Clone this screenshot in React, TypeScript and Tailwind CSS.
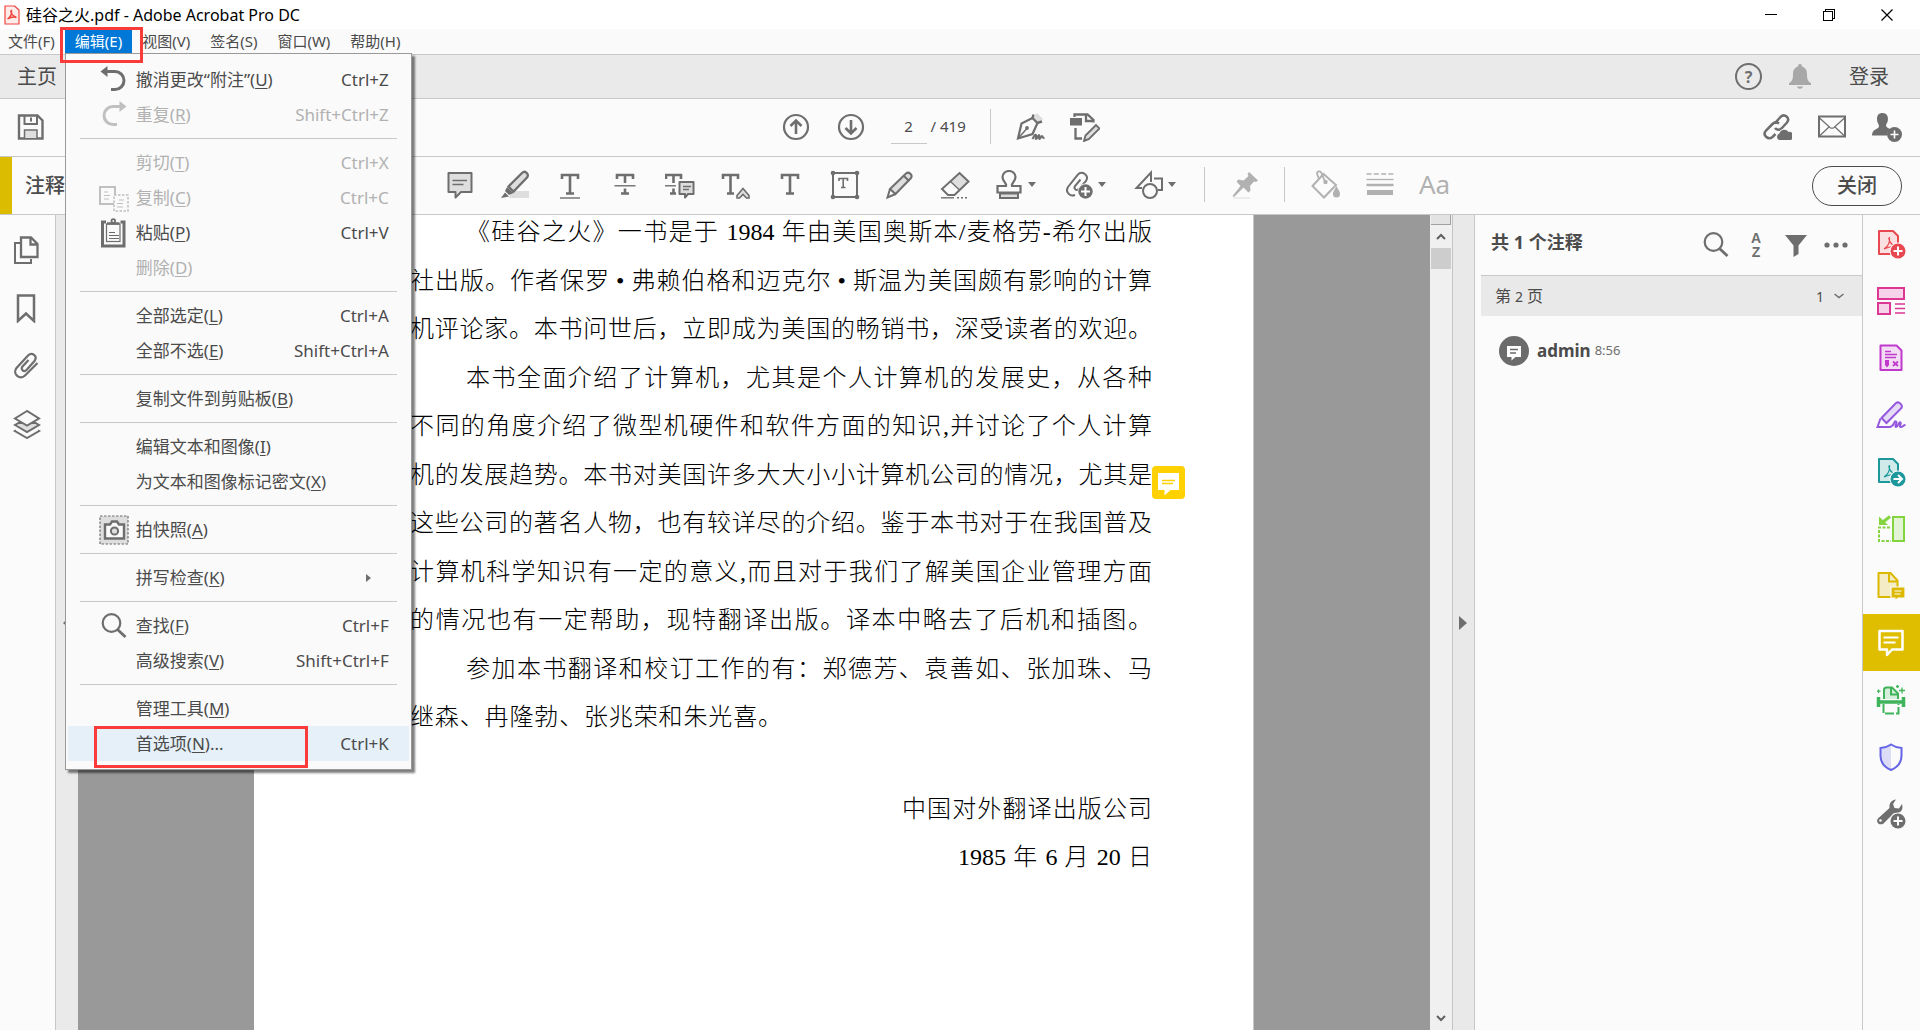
import { Fragment, type ReactNode } from "react";
import clsx from "clsx";

type IconProps = { children: ReactNode; className?: string };

/** Base of every toolbar drawing: a 30px box, 2px strokes in the current colour. */
function Icon({ children, className }: IconProps) {
    return (
        <svg
            viewBox="0 0 30 30"
            className={clsx("h-[30px] w-[30px] shrink-0", className)}
            fill="none"
            stroke="currentColor"
            strokeWidth="2"
            aria-hidden="true"
        >
            {children}
        </svg>
    );
}

const SHADE = "#dedede";

// ---------- Top toolbar ----------
const SaveIcon = () => (
    <Icon>
        <path d="M3 3.500h18.500l5 5V26.500H3z" strokeWidth="2.400" />
        <path d="M8.500 4v8h12.500V4M15 5.500v4" />
        <path d="M8.500 26v-8h12.500v8" fill={SHADE} strokeWidth="1.500" />
    </Icon>
);

const ArrowUpIcon = () => (
    <Icon>
        <circle cx="15" cy="15" r="12" strokeWidth="2.200" />
        <path d="M15 22V9M9.500 14l5.500-5.500 5.500 5.500" strokeWidth="2.600" />
    </Icon>
);

const ArrowDownIcon = () => (
    <Icon>
        <circle cx="15" cy="15" r="12" strokeWidth="2.200" />
        <path d="M15 8v13M9.500 16l5.500 5.500 5.500-5.500" strokeWidth="2.600" />
    </Icon>
);

const SignIcon = () => (
    <Icon>
        <path d="M18.500 5l3.500-4 6 6-4 4z" fill={SHADE} stroke="none" />
        <path d="M18.500 2.500L17.500 6l5 5 4.500-1.500" strokeWidth="2.400" />
        <path d="M17.500 6L6.500 11.500 3 26.500l14.500-4.500 5-11" strokeWidth="2.200" />
        <path d="M3 26.500l8.500-9.500" strokeWidth="1.500" />
        <circle cx="12" cy="16" r="1.900" fill="currentColor" stroke="none" />
        <path d="M17.500 27c2-4 3-5 3.500-4s-1 4 0 4 2-4 3-4-.500 4 .500 4 1.500-3 2.500-3 0 2.500 2.500 2" />
    </Icon>
);

const EditPdfIcon = () => (
    <Icon>
        <rect x="0" y="6" width="12" height="7.500" fill="currentColor" stroke="none" />
        <path d="M4.500 5V2.500h13l6 5.500v2.500M16 2.500V9h6.500" strokeWidth="2.300" />
        <path d="M5.500 16v10.500h6.500" strokeWidth="2.300" />
        <path d="M14 29l1.500-5.500L26 13l3.500 3.500L19 27z" fill={SHADE} strokeWidth="1.900" />
    </Icon>
);

const LinkCloudIcon = () => (
    <Icon>
        <path d="M12.500 11.500l6-6.500c4-4 10 1 6.500 5.500l-5.500 6c-2 2-5 1.500-6.500-.500" strokeWidth="2.500" />
        <path d="M17 11.500c-2-1.500-4.500-1.500-6.500.500L4 18.500c-4 4.500 2 10 6.500 6.500l3-3" strokeWidth="2.500" />
        <path
            d="M17 28a3.500 3.500 0 0 1 .500-6.500 5 5 0 0 1 9-1.500 4 4 0 0 1 2 8z"
            fill="currentColor"
            stroke="#fbfbfb"
            strokeWidth="1.500"
            paintOrder="stroke"
        />
    </Icon>
);

const MailIcon = () => (
    <Icon>
        <rect x="2" y="4.500" width="26" height="20" />
        <path d="M2.500 6L13 15.500q2 1.500 4 0L27.500 6M2.500 24l9.500-9M27.500 24L18 15" strokeWidth="1.200" />
    </Icon>
);

const AddUserIcon = () => (
    <Icon>
        <path
            d="M10.500 1c4 0 5.500 3 5.500 6 0 3.500-2 5-2 6.500 0 2 4 3 4 4-2 2-3 3-3 6H0c0-7 7-6 7-9.500 0-2-2-3-2-7s2-6 5.500-6z"
            fill="currentColor"
            stroke="none"
        />
        <circle cx="22.500" cy="22.500" r="7.500" fill="currentColor" stroke="none" />
        <path d="M22.500 18.500v8M18.500 22.500h8" stroke="#fff" strokeWidth="1.600" />
    </Icon>
);

const BellIcon = () => (
    <Icon>
        <path
            d="M15 2c1.500 0 2 1 2 2.500 4 1.500 5 4 5 8 0 5 1 7 4 8.500v2H4v-2c3-1.500 4-3.500 4-8.500 0-4 1-6.500 5-8C13 3 13.500 2 15 2zM12 24.500h6c-1 3-5 3-6 0z"
            fill="currentColor"
            stroke="none"
        />
    </Icon>
);

// ---------- Comment toolbar ----------
const NoteIcon = () => (
    <Icon>
        <path d="M3.500 3h23v19H16l-5.500 5.500V22h-7z" fill={SHADE} strokeLinejoin="round" />
        <path d="M7.500 10.500h14.500M7.500 14.500h11" strokeWidth="1.400" />
    </Icon>
);

const HighlightIcon = () => (
    <Icon>
        <path d="M12 21h17v7H9z" fill={SHADE} stroke="none" />
        <path d="M8.500 16.500L22 3c3-3 7.500 1 5 4.500L13.500 21.500z" fill={SHADE} strokeWidth="2.300" />
        <path d="M7 17l6.500 6-4.500 2-4-4zM1 28l4-5.500 4 4z" fill="currentColor" stroke="none" />
    </Icon>
);

const UnderlineIcon = () => (
    <Icon>
        <path d="M7 9V5h16v4M15 5v18.500M11 23.500h8" strokeWidth="2.600" />
        <path d="M5 28h20" strokeWidth="1.400" />
    </Icon>
);

const StrikeIcon = () => (
    <Icon>
        <path d="M7 9V5h16v4M15 5v8M15 18.500v5M11 23.500h8" strokeWidth="2.600" />
        <path d="M4.500 15.800h21" strokeWidth="1.400" />
    </Icon>
);

const ReplaceIcon = () => (
    <Icon>
        <path d="M1 9V5h15v4M8.500 5v8M8.500 18.500v5M5 23.500h6" strokeWidth="2.600" />
        <path d="M0 15.800h11" strokeWidth="1.400" />
        <path d="M14.500 12h14v12H23l-3 3.500V24h-5.500z" fill={SHADE} strokeLinejoin="round" />
        <path d="M18 16.500h8M18 19.500h6" strokeWidth="1.400" />
    </Icon>
);

const InsertIcon = () => (
    <Icon>
        <path d="M3 9V5h15v4M10.500 5v18.500M7 23.500h7" strokeWidth="2.600" />
        <path d="M17 25.500l6-7 6 7V28h-2.500L23 24.500 19.500 28H17z" fill={SHADE} strokeWidth="1.600" />
    </Icon>
);

const AddTextIcon = () => (
    <Icon>
        <path d="M7 9V5h16v4M15 5v18.500M11 23.500h8" strokeWidth="2.600" />
    </Icon>
);

const TextBoxIcon = () => (
    <Icon>
        <rect x="3" y="3" width="24" height="24" />
        <path d="M9 11V8.500h8.500V11M13.200 8.500v9M11 17.500h4.500" strokeWidth="1.600" />
        <g fill="currentColor" stroke="none">
            <circle cx="3" cy="3" r="2.300" />
            <circle cx="27" cy="3" r="2.300" />
            <circle cx="3" cy="27" r="2.300" />
            <circle cx="27" cy="27" r="2.300" />
        </g>
    </Icon>
);

const PencilIcon = () => (
    <Icon>
        <path d="M5 19L21 3.500c3-2.500 7 1.500 5 4.500L10.500 24z" fill={SHADE} />
        <path d="M5 19l-2.500 8.500L10.500 24M18.500 5.500l5.500 5.500" />
    </Icon>
);

const EraserIcon = () => (
    <Icon>
        <path d="M10.500 11l9.500-8 8.500 8-8.500 9z" fill={SHADE} stroke="none" />
        <path d="M19.500 3l9 8.500L14.500 25H8l-6-6z" />
        <path d="M10.500 11.500l9 8.500" strokeWidth="1.400" />
        <path d="M1 27.800h13" strokeWidth="1.400" />
        <path d="M17 27.800h11" strokeWidth="1.400" strokeDasharray="2 2" />
    </Icon>
);

const StampIcon = () => (
    <Icon>
        <path d="M12 16c1-3-3.500-4.500-3.500-9a6.500 6 0 0 1 13 0c0 4.500-4.500 6-3.500 9h8.500v6.500h-23V16z" strokeWidth="2.200" />
        <path d="M6 23.500h18V28H6z" fill={SHADE} />
    </Icon>
);

const AttachIcon = () => (
    <Icon>
        <path d="M11 25c-5 2-10-3-7-8L14 4.500c4-4.500 11.500 1 8 6.500l-7 8c-3 2.500-5.500-.500-4-3l5.500-6.500" />
        <circle cx="21.500" cy="21.500" r="8" fill="#fafafa" stroke="none" />
        <circle cx="21.500" cy="21.500" r="7.200" fill="currentColor" stroke="none" />
        <path d="M21.500 17v9M17 21.500h9" stroke="#fff" />
    </Icon>
);

const ShapesIcon = () => (
    <Icon>
        <path d="M17 12V2.500L2.500 18H8M20 8.500h8V20h-4" />
        <circle cx="16" cy="21" r="7" />
    </Icon>
);

const PinIcon = () => (
    <Icon>
        <path
            d="M19 2l9 8.500-2 1.500-2-.500-4 4.500.500 4.500-2 2-5-5L4 27l-1.500-1L10.500 16 6.500 11.500l2-2 5 1 5-4.500L17.500 4z"
            fill="currentColor"
            stroke="none"
        />
        <path d="M3 28h17" stroke="#ececec" />
    </Icon>
);

const BucketIcon = () => (
    <Icon>
        <path d="M13.500 4L2.500 16 14 27.500 26 15z" />
        <path d="M15.500 13L11.500 3C9.500-.500 6 2 7.500 5l1.500 4" strokeWidth="1.800" />
        <circle cx="15.500" cy="12" r="2.200" fill="currentColor" stroke="none" />
        <path d="M26.500 16c2 4 3.500 5.500 3.500 8a3.500 3.500 0 0 1-7 0c0-2.500 1.500-4 3.500-8z" fill="currentColor" stroke="none" />
    </Icon>
);

const LineWeightIcon = () => (
    <Icon>
        <path d="M1.500 4h27" strokeWidth="1.300" strokeDasharray="5 2.300" />
        <path d="M1.500 9.500h27" strokeWidth="1.300" />
        <path d="M1.500 15h27" strokeWidth="2.500" />
        <path d="M2 22.500h26" strokeWidth="5" />
    </Icon>
);

// ---------- Left rail ----------
const PagesIcon = () => (
    <Icon>
        <path d="M9 2.500h10l6.500 6.500v13H9zM18.500 3v6.500h6.500" strokeWidth="2.300" />
        <path d="M8 8H3v20h16v-4" />
    </Icon>
);

const BookmarkIcon = () => (
    <Icon>
        <path d="M6 2.500h16V28l-8-7.500L6 28z" strokeWidth="2.500" />
    </Icon>
);

const ClipIcon = () => (
    <Icon>
        <path
            d="M16.500 9l-6 6.500c-2.500 3 1.500 6 4 3.500l8-9C26 5 20 .500 16 4.500L4.500 17c-4.500 6 3.500 12.500 8.500 7.500L25.500 12"
            strokeWidth="2.200"
        />
    </Icon>
);

const LayersIcon = () => (
    <Icon>
        <path d="M4 21.500l-1 .500 12 7 12-7-1-.500" />
        <path d="M3 16l12 7 12-7-3.500-2H6.500z" fill={SHADE} />
        <path d="M15 2L3 9.500l12 7 12-7z" fill="#fafafa" />
    </Icon>
);

// ---------- Edit menu ----------
const UndoIcon = () => (
    <Icon>
        <path d="M8 6.500h8a8.800 8.800 0 0 1 0 18h-4" strokeWidth="3" />
        <path d="M1.500 6.500l7-5.500v11z" fill="currentColor" stroke="none" />
    </Icon>
);

const RedoIcon = () => (
    <Icon>
        <path d="M21 6.500h-7a8.800 8.800 0 0 0 0 18h4" strokeWidth="3" />
        <path d="M27.500 6.500L20.500 1v11z" fill="currentColor" stroke="none" />
    </Icon>
);

const CopyIcon = () => (
    <Icon>
        <rect x="1" y="4" width="15" height="17" />
        <path d="M5 9h4M5 12.500h6M5 16h5" strokeWidth="1.200" />
        <rect x="15" y="12" width="14" height="16" fill="#fafafa" strokeDasharray="2.500 1.500" strokeWidth="1.500" />
        <path d="M20 17h5M18 20.500h6M18 24h6" strokeWidth="1.200" />
    </Icon>
);

const PasteIcon = () => (
    <Icon>
        <path d="M7 4H3.500v24H25V4H21.500" strokeWidth="3" />
        <rect x="7.500" y="6" width="13.500" height="17.500" fill="#fafafa" strokeWidth="1.200" />
        <path d="M8 5.500h12.500" strokeWidth="2.500" />
        <circle cx="14.300" cy="3" r="1.800" strokeWidth="1.800" />
        <path d="M10 14.500h6M10 17.500h10M10 20.500h10" strokeWidth="1.200" />
    </Icon>
);

const CameraIcon = () => (
    <Icon>
        <rect x="1" y="1" width="28" height="28" fill={SHADE} strokeDasharray="2.500 1.500" strokeWidth="1.200" />
        <path d="M6 9.500h5l2-3h5l2 3h5v14H6z" fill="#fafafa" strokeWidth="2.400" />
        <circle cx="15.500" cy="16" r="3.600" fill={SHADE} />
    </Icon>
);

const SearchIcon = () => (
    <Icon>
        <circle cx="12.500" cy="12" r="8.800" strokeWidth="2.200" />
        <path d="M18.500 18.500l8 7.500" strokeWidth="2.800" />
    </Icon>
);

// ---------- Comments panel ----------
const FilterIcon = () => (
    <Icon>
        <path d="M4 5h22l-8.500 10.500V24l-5 3V15.500z" fill="currentColor" stroke="none" />
    </Icon>
);

const MoreIcon = () => (
    <Icon>
        <g fill="currentColor" stroke="none">
            <circle cx="6" cy="15" r="2.600" />
            <circle cx="15" cy="15" r="2.600" />
            <circle cx="24" cy="15" r="2.600" />
        </g>
    </Icon>
);

// ---------- Right rail ----------
const SQUIGGLE = "M8 20c4-2.500 6-7 5.500-11.500-1.500 0-.500 6.500 7 9.500-3.500-1-7.500-.500-12.500 2z";

const CreatePdfIcon = () => (
    <Icon className="text-[#e8484f]">
        <path d="M3 2h14l5 5v18H3z" fill="#fae0e1" strokeLinejoin="round" />
        <path d={SQUIGGLE} strokeWidth="1.200" />
        <circle cx="22" cy="22" r="8.500" fill="#fafafa" stroke="none" />
        <circle cx="22" cy="22" r="7.500" fill="currentColor" stroke="none" />
        <path d="M22 17.500v9M17.500 22h9" stroke="#fff" />
    </Icon>
);

const OrganizeIcon = () => (
    <Icon className="text-[#dc3792]">
        <rect x="2" y="2" width="26" height="11" fill="#f6d3e8" />
        <rect x="2" y="17" width="12" height="11" fill="#f6d3e8" />
        <path d="M19 18h10M19 22.500h10M19 27h10" strokeWidth="1.400" />
    </Icon>
);

const FormIcon = () => (
    <Icon className="text-[#c038cc]">
        <path d="M4.500 2.500h16l5 5v19.500h-21z" fill="#f3ddf5" strokeLinejoin="round" />
        <path d="M9 8.500h6M9 11.500h12M9 14.500h11" strokeWidth="1.300" />
        <path d="M9 17h4v5l-2 2.500L9 22z" fill="currentColor" stroke="none" />
        <path d="M17 18.500l5 4.500M22 18.500L17 23" strokeWidth="1.800" />
    </Icon>
);

const FillSignIcon = () => (
    <Icon className="text-[#9458dd]">
        <path d="M5.500 18L20 3c3-2 7 2 5.500 5L10.500 23z" fill="#e6dbf6" />
        <path d="M4.500 18.500L1.500 27H14c5-1 4-7 6-5.500s-2 5 0 5.500 3-6 4.500-4.500-2 4 0 4.500 2.500-2 5-2" />
    </Icon>
);

const ExportPdfIcon = () => (
    <Icon className="text-[#1c979c]">
        <path d="M3 2h14l5 5v18H3z" fill="#d0eaea" strokeLinejoin="round" />
        <path d={SQUIGGLE} strokeWidth="1.200" />
        <circle cx="22" cy="22" r="8.500" fill="#fafafa" stroke="none" />
        <circle cx="22" cy="22" r="7.500" fill="currentColor" stroke="none" />
        <path d="M17.500 22h7M22 18l4 4-4 4" stroke="#fff" />
    </Icon>
);

const CombineIcon = () => (
    <Icon className="text-[#83d43f]">
        <rect x="17" y="3" width="11" height="24" fill="#e2f4d5" />
        <path d="M14 13.500H3V27h12" strokeDasharray="3 1.500" strokeWidth="2" />
        <path d="M14 2.500L7 8" strokeWidth="3" />
        <path d="M3 2.500v8.500h9z" fill="currentColor" stroke="none" />
    </Icon>
);

const FileCommentIcon = () => (
    <Icon className="text-[#dcb900]">
        <path d="M2.500 2h12l7 7.500V26h-19z" fill="#f4ecc4" strokeLinejoin="round" />
        <path d="M13 3v7.500h8" />
        <path d="M15 16h14v11h-7l-3 3v-3h-4z" fill="currentColor" stroke="#fafafa" strokeWidth="1.200" />
        <path d="M18.500 20h7M18.500 23h6" stroke="#fff" strokeWidth="1.200" />
    </Icon>
);

const CommentIcon = () => (
    <Icon className="text-white">
        <path d="M3.500 3h23v18.500H16L11 27v-5.500H3.500z" strokeWidth="2.500" strokeLinejoin="round" />
        <path d="M7.500 9.500h15M7.500 14.500h12" />
    </Icon>
);

const ScanIcon = () => (
    <Icon className="text-[#3fb45a]">
        <path d="M8 14V5c0-1.500 1-2.500 2.500-2.500H16l6 6V14" fill="#d6efdc" />
        <path d="M15 3v6.500h6.500" />
        <path d="M2.500 12v10M27.500 12v10M2 17h26" strokeWidth="3.500" />
        <path d="M7.500 19v9.500h15V19" strokeDasharray="9 2" />
        <path d="M26 2.500v6M23 5.500h6M21.500 0v3M20 1.500h3M2.500 4.500v3.500M1 6.200h3.500" strokeWidth="1.300" />
    </Icon>
);

const ShieldIcon = () => (
    <Icon className="text-[#6665e6]">
        <path d="M15 2.500v25.500C8 25 4.500 20 4.500 14V6C9 6 12 4.500 15 2.500z" fill="#dddcf6" stroke="none" />
        <path d="M15 2.500c3 2 6 3.500 10.500 3.500v8c0 6-3.500 11-10.500 14C8 25 4.500 20 4.500 14V6C9 6 12 4.500 15 2.500z" />
    </Icon>
);

const ToolsIcon = () => (
    <Icon className="text-[#6e6e6e]">
        <path
            d="M20 .500l-3 4.500 1.500 4 4.500.500 3-4.500c2 7-3 10-8 9L7.500 24.500C4 27-1 23.500 2 19.500L13.500 9c-.500-5 2-8 6.500-8.500z"
            fill="currentColor"
            stroke="none"
        />
        <circle cx="4.500" cy="21.500" r="1.300" fill="#fff" stroke="none" />
        <circle cx="22" cy="22" r="8.500" fill="#fafafa" stroke="none" />
        <circle cx="22" cy="22" r="7.500" fill="currentColor" stroke="none" />
        <path d="M22 17.500v9M17.500 22h9" stroke="#fff" />
    </Icon>
);

const AcrobatLogo = () => (
    <svg viewBox="0 0 16 20" className="h-5 w-4" fill="none" stroke="#f0443e" aria-hidden="true">
        <path d="M1 1h9.500L15 5v14H1z" fill="#fdecea" strokeWidth="1.200" strokeLinejoin="round" />
        <path d="M3.500 14c3-2 4.500-5 4-8.500-1.500 0-.500 5 5 7-2.500-1-5.500-.500-9 1.500z" strokeWidth="1.400" />
    </svg>
);

const Caret = () => (
    <svg viewBox="0 0 8 5" className="h-[5px] w-2" fill="currentColor" aria-hidden="true">
        <path d="M0 0h8L4 5z" />
    </svg>
);

// ---------- Data ----------
type MenuEntry = {
    label: string;
    accessKey: string;
    suffix?: string;
    shortcut?: string;
    icon?: ReactNode;
    disabled?: boolean;
    submenu?: boolean;
    active?: boolean;
};

const EDIT_MENU: MenuEntry[][] = [
    [
        { label: "撤消更改“附注”", accessKey: "U", shortcut: "Ctrl+Z", icon: <UndoIcon /> },
        { label: "重复", accessKey: "R", shortcut: "Shift+Ctrl+Z", icon: <RedoIcon />, disabled: true },
    ],
    [
        { label: "剪切", accessKey: "T", shortcut: "Ctrl+X", disabled: true },
        { label: "复制", accessKey: "C", shortcut: "Ctrl+C", icon: <CopyIcon />, disabled: true },
        { label: "粘贴", accessKey: "P", shortcut: "Ctrl+V", icon: <PasteIcon /> },
        { label: "删除", accessKey: "D", disabled: true },
    ],
    [
        { label: "全部选定", accessKey: "L", shortcut: "Ctrl+A" },
        { label: "全部不选", accessKey: "E", shortcut: "Shift+Ctrl+A" },
    ],
    [{ label: "复制文件到剪贴板", accessKey: "B" }],
    [
        { label: "编辑文本和图像", accessKey: "I" },
        { label: "为文本和图像标记密文", accessKey: "X" },
    ],
    [{ label: "拍快照", accessKey: "A", icon: <CameraIcon /> }],
    [{ label: "拼写检查", accessKey: "K", submenu: true }],
    [
        { label: "查找", accessKey: "F", shortcut: "Ctrl+F", icon: <SearchIcon /> },
        { label: "高级搜索", accessKey: "V", shortcut: "Shift+Ctrl+F" },
    ],
    [
        { label: "管理工具", accessKey: "M" },
        { label: "首选项", accessKey: "N", suffix: "...", shortcut: "Ctrl+K", active: true },
    ],
];

type Line = { text: string; indent?: boolean; last?: boolean };

const LINES: Line[] = [
    { text: "《硅谷之火》一书是于 1984 年由美国奥斯本/麦格劳-希尔出版", indent: true },
    { text: "社出版。作者保罗•弗赖伯格和迈克尔•斯温为美国颇有影响的计算" },
    { text: "机评论家。本书问世后，立即成为美国的畅销书，深受读者的欢迎。" },
    { text: "本书全面介绍了计算机，尤其是个人计算机的发展史，从各种", indent: true },
    { text: "不同的角度介绍了微型机硬件和软件方面的知识,并讨论了个人计算" },
    { text: "机的发展趋势。本书对美国许多大大小小计算机公司的情况，尤其是" },
    { text: "这些公司的著名人物，也有较详尽的介绍。鉴于本书对于在我国普及" },
    { text: "计算机科学知识有一定的意义,而且对于我们了解美国企业管理方面" },
    { text: "的情况也有一定帮助，现特翻译出版。译本中略去了后机和插图。" },
    { text: "参加本书翻译和校订工作的有：郑德芳、袁善如、张加珠、马", indent: true },
    { text: "继森、冉隆勃、张兆荣和朱光喜。", last: true },
];

const COMMENT_TOOLS = [
    { name: "添加附注", icon: <NoteIcon /> },
    { name: "高亮文本", icon: <HighlightIcon /> },
    { name: "下划线文本", icon: <UnderlineIcon /> },
    { name: "删划线文本", icon: <StrikeIcon /> },
    { name: "替换文本", icon: <ReplaceIcon /> },
    { name: "插入文本", icon: <InsertIcon /> },
    { name: "添加文本注释", icon: <AddTextIcon /> },
    { name: "添加文本框", icon: <TextBoxIcon /> },
    { name: "绘图工具", icon: <PencilIcon /> },
    { name: "擦除绘图", icon: <EraserIcon /> },
];

const DROPDOWN_TOOLS = [
    { name: "添加图章", icon: <StampIcon /> },
    { name: "附加文件", icon: <AttachIcon /> },
    { name: "绘图形状", icon: <ShapesIcon /> },
];

const LEFT_RAIL = [
    { name: "页面缩略图", icon: <PagesIcon /> },
    { name: "书签", icon: <BookmarkIcon /> },
    { name: "附件", icon: <ClipIcon /> },
    { name: "图层", icon: <LayersIcon /> },
];

const RIGHT_RAIL = [
    { name: "创建 PDF", icon: <CreatePdfIcon /> },
    { name: "组织页面", icon: <OrganizeIcon /> },
    { name: "准备表单", icon: <FormIcon /> },
    { name: "填写和签名", icon: <FillSignIcon /> },
    { name: "导出 PDF", icon: <ExportPdfIcon /> },
    { name: "合并文件", icon: <CombineIcon /> },
    { name: "发送以供注释", icon: <FileCommentIcon /> },
    { name: "注释", icon: <CommentIcon />, active: true },
    { name: "扫描和 OCR", icon: <ScanIcon /> },
    { name: "保护", icon: <ShieldIcon /> },
    { name: "更多工具", icon: <ToolsIcon /> },
];

// ---------- Sections ----------
function TitleBar() {
    return (
        <header className="flex h-[29px] shrink-0 items-center bg-white pl-1 text-black">
            <AcrobatLogo />
            <h1 className="ml-1.5 text-[16px]">硅谷之火.pdf - Adobe Acrobat Pro DC</h1>
            <div className="ml-auto flex h-full pr-1">
                <button aria-label="最小化" className="flex w-[58px] items-center justify-center">
                    <svg viewBox="0 0 12 12" className="h-3 w-3" stroke="#000" fill="none" shapeRendering="crispEdges">
                        <path d="M0 5.500h12" />
                    </svg>
                </button>
                <button aria-label="还原" className="flex w-[58px] items-center justify-center">
                    <svg viewBox="0 0 12 12" className="h-3 w-3" stroke="#000" fill="none" shapeRendering="crispEdges">
                        <path d="M.500 2.500h9v9h-9zM2.500 2V.500h9v9H10" />
                    </svg>
                </button>
                <button aria-label="关闭窗口" className="flex w-[58px] items-center justify-center">
                    <svg viewBox="0 0 12 12" className="h-3 w-3" stroke="#000" fill="none">
                        <path d="M.500.500l11 11M11.500.500l-11 11" strokeWidth="1.200" />
                    </svg>
                </button>
            </div>
        </header>
    );
}

function EditMenu() {
    return (
        <div
            role="menu"
            className="absolute top-6 left-0 z-20 w-[347px] border border-[#999] bg-[#fafafa] py-2 text-[17px] text-[#4b4b4b] shadow-[3px_3px_2px_rgba(0,0,0,0.5)]"
        >
            {EDIT_MENU.map((group, i) => (
                <Fragment key={i}>
                    {i > 0 && <hr className="mx-3.5 my-1.5 border-[#c8c8c8]" />}
                    {group.map((item) => (
                        <button
                            key={item.label}
                            role="menuitem"
                            disabled={item.disabled}
                            className={clsx(
                                "relative mx-0.5 flex h-[35px] w-[341px] items-center pr-5 pl-[31px] text-left",
                                item.disabled && "text-[#b1b1b1]",
                                item.active && "bg-[#e5f0f9]",
                            )}
                        >
                            <span className={clsx("mr-[7px] w-[30px]", item.disabled ? "text-[#c0c0c0]" : "text-[#6e6e6e]")}>
                                {item.icon}
                            </span>
                            <span>
                                {item.label}(<u className="underline-offset-2">{item.accessKey}</u>){item.suffix}
                            </span>
                            {item.shortcut && <span className="ml-auto">{item.shortcut}</span>}
                            {item.submenu && (
                                <svg viewBox="0 0 5 8" className="mr-[18px] ml-auto h-2 w-[5px]" fill="#6e6e6e">
                                    <path d="M0 0l5 4-5 4z" />
                                </svg>
                            )}
                            {/* Marker round the preferences entry */}
                            {item.active && <span className="absolute top-0 left-[26px] h-[42px] w-[214px] border-3 border-[#fb3a3a]" />}
                        </button>
                    ))}
                </Fragment>
            ))}
        </div>
    );
}

function MenuBar() {
    const item = "h-6 px-2.5";
    return (
        <nav className="flex h-[26px] shrink-0 border-b border-[#c8c8c8] bg-[#fafafa] text-[15px] text-[#4b4b4b]">
            <button className="h-6 pr-2.5 pl-2">文件(F)</button>
            <div className="relative">
                <button className={clsx(item, "bg-[#0078d7] text-white")}>编辑(E)</button>
                <EditMenu />
                {/* Marker round the open menu title */}
                <span className="absolute -top-0.5 -left-[5px] z-30 h-9 w-[83px] border-3 border-[#fb3a3a]" />
            </div>
            <button className={item}>视图(V)</button>
            <button className={item}>签名(S)</button>
            <button className={item}>窗口(W)</button>
            <button className={item}>帮助(H)</button>
        </nav>
    );
}

function TabBar() {
    return (
        <div className="flex h-11 shrink-0 items-center border-b border-[#c8c8c8] bg-[#eaeaea] pr-[31px] pl-[17px] text-[20px] text-[#4b4b4b]">
            <button>主页</button>
            <button
                aria-label="帮助"
                className="ml-auto flex h-[27px] w-[27px] items-center justify-center rounded-full border-2 border-[#6e6e6e] text-[16px] leading-none font-bold text-[#6e6e6e]"
            >
                ?
            </button>
            <button aria-label="通知" className="mr-[34px] ml-[23px] text-[#a8a8a8]">
                <BellIcon />
            </button>
            <button>登录</button>
        </div>
    );
}

function MainToolbar() {
    const tool = "flex w-[55px] items-center justify-center";
    return (
        <div className="flex h-[58px] shrink-0 border-b border-[#c8c8c8] pb-0.5 text-[#6e6e6e]">
            <div className="flex flex-1 pl-[3px]">
                <button aria-label="保存" className={tool}>
                    <SaveIcon />
                </button>
            </div>
            <div className="mr-9 flex items-center">
                <button aria-label="上一页" className={tool}>
                    <ArrowUpIcon />
                </button>
                <button aria-label="下一页" className={tool}>
                    <ArrowDownIcon />
                </button>
                <label className="ml-3 flex items-center text-[15px] text-[#4b4b4b]">
                    <input
                        aria-label="页码"
                        defaultValue="2"
                        className="h-[35px] w-9 border-b border-[#c8c8c8] bg-transparent text-center"
                    />
                    <span className="ml-1 w-[35px] whitespace-nowrap">/ 419</span>
                </label>
                <span className="mr-3 ml-6 h-[35px] w-px bg-[#c8c8c8]" />
                <button aria-label="签名" className={tool}>
                    <SignIcon />
                </button>
                <button aria-label="编辑 PDF" className={tool}>
                    <EditPdfIcon />
                </button>
            </div>
            <div className="flex flex-1 justify-end pr-1.5">
                <button aria-label="共享链接" className={tool}>
                    <LinkCloudIcon />
                </button>
                <button aria-label="发送邮件" className={tool}>
                    <MailIcon />
                </button>
                <button aria-label="邀请他人" className={tool}>
                    <AddUserIcon />
                </button>
            </div>
        </div>
    );
}

function CommentToolbar() {
    const tool = "flex h-full w-[55px] shrink-0 items-center justify-center";
    return (
        <div className="flex h-[58px] shrink-0 items-center border-b border-[#c8c8c8] text-[#6e6e6e]">
            <div className="flex h-full flex-1 items-center border-l-12 border-[#dcbc00] pl-[13px]">
                <h2 className="text-[20px] font-medium text-[#4b4b4b]">注释</h2>
            </div>
            <div className="mr-[33px] flex h-full items-center pb-0.5">
                {COMMENT_TOOLS.map((t) => (
                    <button key={t.name} aria-label={t.name} className={tool}>
                        {t.icon}
                    </button>
                ))}
                {DROPDOWN_TOOLS.map((t) => (
                    <button key={t.name} aria-label={t.name} className="flex h-full w-[70px] shrink-0 items-center gap-1 pl-3">
                        {t.icon}
                        <Caret />
                    </button>
                ))}
                <span className="mx-3 h-[35px] w-px bg-[#c8c8c8]" />
                <button aria-label="保持工具选定" disabled className={clsx(tool, "text-[#b1b1b1]")}>
                    <PinIcon />
                </button>
                <span className="mx-3 h-[35px] w-px bg-[#c8c8c8]" />
                <button aria-label="颜色" disabled className={clsx(tool, "text-[#b1b1b1]")}>
                    <BucketIcon />
                </button>
                <button aria-label="线条粗细" disabled className={clsx(tool, "text-[#b1b1b1]")}>
                    <LineWeightIcon />
                </button>
                <button aria-label="文本属性" disabled className={clsx(tool, "text-[26px] text-[#b1b1b1]")}>
                    Aa
                </button>
            </div>
            <div className="flex flex-1 justify-end pr-[18px]">
                <button className="h-10 w-[90px] rounded-full border border-[#4b4b4b] text-[20px] font-medium text-[#4b4b4b]">
                    关闭
                </button>
            </div>
        </div>
    );
}

function LeftRail() {
    return (
        <>
            <aside className="flex w-14 shrink-0 flex-col border-r border-[#c8c8c8] pt-1.5 text-[#6e6e6e]">
                {LEFT_RAIL.map((t) => (
                    <button key={t.name} aria-label={t.name} className="flex h-[58px] items-center justify-center pr-px">
                        {t.icon}
                    </button>
                ))}
            </aside>
            <button aria-label="展开导览窗格" className="flex w-[22px] shrink-0 items-center justify-center bg-[#eaeaea]">
                <svg viewBox="0 0 8 14" className="h-3.5 w-2" fill="#6e6e6e">
                    <path d="M8 0v14L0 7z" />
                </svg>
            </button>
        </>
    );
}

/** One set line of the page; the name dots stand in a wide cell of their own. */
function TextLine({ text, indent, last }: Line) {
    return (
        <p className={clsx("whitespace-nowrap [text-align-last:justify]", indent && "pl-14", last && "w-[372px]")}>
            {text.split("•").map((part, i) => (
                <Fragment key={i}>
                    {i > 0 && <span className="px-1.5">•</span>}
                    {part}
                </Fragment>
            ))}
        </p>
    );
}

function Document() {
    return (
        <main className="min-w-0 flex-1 overflow-hidden bg-[#999]">
            <article className="mx-auto flow-root h-full w-[1000px] border-r border-[#c8c8c8] bg-white pr-[101px] pl-[156px] font-['Liberation_Serif','Noto_Sans_CJK_SC',serif] text-[24px] leading-[48px] font-light text-black">
                <div className="relative -mt-[7px] flex h-[533px] flex-col justify-between">
                    {LINES.map((line) => (
                        <TextLine key={line.text} {...line} />
                    ))}
                    {/* Sticky note pinned on the page */}
                    <button aria-label="附注" className="absolute top-[258px] left-[742px] h-[33px] w-[33px] rounded-sm bg-[#ffd100]">
                        <svg viewBox="0 0 33 33" className="h-[33px] w-[33px]">
                            <path d="M6 7h21v17h-8.500l-6 5.500V24H6z" fill="#fff" />
                            <path d="M10 14.500h13M10 17.500h11" stroke="#ffd100" strokeWidth="1.400" />
                        </svg>
                    </button>
                </div>
                <footer className="mt-11 flex flex-col items-end">
                    <p className="w-[250px] [text-align-last:justify]">中国对外翻译出版公司</p>
                    <p className="w-[194px] [text-align-last:justify]">1985 年 6 月 20 日</p>
                </footer>
            </article>
        </main>
    );
}

function ScrollBar() {
    return (
        <>
            <div className="flex w-[23px] shrink-0 flex-col border-r border-[#c4c4c4] bg-[#f0f0f0] px-px text-[#606060]">
                <span className="h-2.5 border-r border-b border-[#a0a0a0] bg-[#e3e3e3]" />
                <button aria-label="向上滚动" className="flex h-[23px] items-center justify-center">
                    <svg viewBox="0 0 10 7" className="h-[7px] w-2.5" fill="none" stroke="currentColor" strokeWidth="2">
                        <path d="M1 6l4-4 4 4" />
                    </svg>
                </button>
                <span className="h-[21px] bg-[#cdcdcd]" />
                <button aria-label="向下滚动" className="mt-auto flex h-[23px] items-center justify-center">
                    <svg viewBox="0 0 10 7" className="h-[7px] w-2.5" fill="none" stroke="currentColor" strokeWidth="2">
                        <path d="M1 1l4 4 4-4" />
                    </svg>
                </button>
            </div>
            <button
                aria-label="折叠右侧窗格"
                className="flex w-[22px] shrink-0 items-center border-r border-[#c8c8c8] bg-[#e9e9e9] pl-1.5"
            >
                <svg viewBox="0 0 8 14" className="h-3.5 w-2" fill="#6e6e6e">
                    <path d="M0 0v14l8-7z" />
                </svg>
            </button>
        </>
    );
}

function CommentsPanel() {
    const tool = "flex h-10 w-10 items-center justify-center";
    return (
        <section className="w-[387px] shrink-0 pl-1.5 text-[#4b4b4b]">
            <div className="flex h-[60px] items-center pr-1.5 pl-2.5">
                <h2 className="pb-1.5 text-[18px] font-bold">共 1 个注释</h2>
                <div className="ml-auto flex text-[#6e6e6e]">
                    <button aria-label="搜索注释" className={tool}>
                        <SearchIcon />
                    </button>
                    <button
                        aria-label="注释排序"
                        className={clsx(tool, "flex-col font-['Liberation_Sans',sans-serif] text-[14px] leading-[14px] font-bold")}
                    >
                        <span>A</span>
                        <span>Z</span>
                    </button>
                    <button aria-label="过滤注释" className={tool}>
                        <FilterIcon />
                    </button>
                    <button aria-label="选项" className={tool}>
                        <MoreIcon />
                    </button>
                </div>
            </div>
            <button className="flex h-[41px] w-full items-center border-t border-[#c8c8c8] bg-[#e9e9e9] pr-[18px] pl-3.5 text-[16px]">
                <span>
                    第<span className="px-1 text-[14px]">2</span>页
                </span>
                <span className="ml-auto text-[14px]">1</span>
                <svg viewBox="0 0 10 6" className="ml-2.5 h-1.5 w-2.5" fill="none" stroke="#6e6e6e" strokeWidth="1.500">
                    <path d="M.500 1L5 4.500 9.500 1" />
                </svg>
            </button>
            <div className="flex items-center pt-5 pl-[18px]">
                <svg viewBox="0 0 30 30" className="h-[30px] w-[30px]">
                    <circle cx="15" cy="15" r="15" fill="#6b6b6b" />
                    <path d="M8 10h14v11h-5.500L12.500 24.500V21H8z" fill="#fff" />
                    <path d="M11 13.500h8M11 17h6" stroke="#6b6b6b" strokeWidth="1.300" />
                </svg>
                <span className="ml-2 text-[17px] font-bold">admin</span>
                <time className="ml-1 text-[13px] text-[#6e6e6e]">8:56</time>
            </div>
        </section>
    );
}

function RightRail() {
    return (
        <aside className="flex w-[58px] shrink-0 flex-col border-l border-[#c8c8c8]">
            {RIGHT_RAIL.map((t) => (
                <button
                    key={t.name}
                    aria-label={t.name}
                    className={clsx("flex h-[57px] items-center justify-center pr-0.5", t.active && "bg-[#dfbe00]")}
                >
                    {t.icon}
                </button>
            ))}
        </aside>
    );
}

export default function App() {
    return (
        <div className="flex h-screen flex-col overflow-hidden bg-[#fbfbfb] font-['Noto_Sans','Noto_Sans_CJK_SC',sans-serif]">
            <TitleBar />
            <MenuBar />
            <TabBar />
            <MainToolbar />
            <CommentToolbar />
            <div className="flex min-h-0 flex-1">
                <LeftRail />
                <Document />
                <ScrollBar />
                <CommentsPanel />
                <RightRail />
            </div>
        </div>
    );
}
